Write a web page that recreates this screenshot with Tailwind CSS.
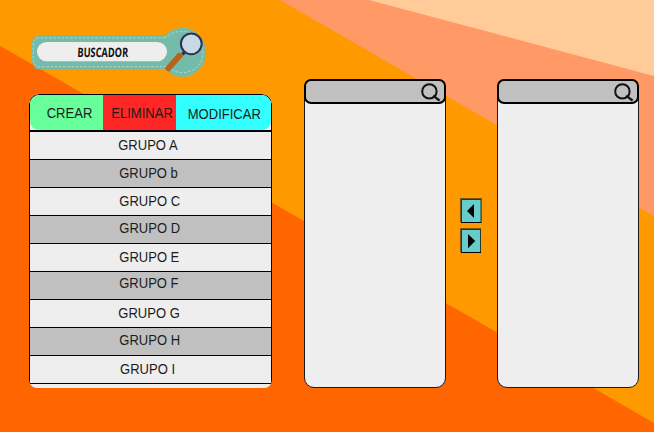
<!DOCTYPE html>
<html lang="es">
<head>
<meta charset="utf-8">
<title>Buscador</title>
<script src="https://cdn.jsdelivr.net/npm/@tailwindcss/browser@4"></script>
</head>
<body class="relative w-[654px] h-[432px] overflow-hidden bg-[#ff6600] font-['Liberation_Sans',sans-serif] text-[14px] leading-[16px] text-[#1c1c1c]">
  <svg class="absolute inset-0" width="654" height="432" viewBox="0 0 654 432">
    <path d="M0 0H654V423L0 45.7Z" fill="#ff9900"/>
    <path d="M280 0H654V216Z" fill="#ff9966"/>
    <path d="M369 0H654V76Z" fill="#ffcc99"/>
  </svg>

  <main class="relative flex h-full items-start">
    <section class="ml-[29px] w-[243px] pt-[27px]">
      <div class="relative h-[67px]">
        <svg width="180" height="52" viewBox="29 27 180 52">
          <g fill="#74bbaa">
            <path d="M39 35.7H170V69.3H39Q34 69.3 33 64Q31.3 61 31.7 57V43Q33 36 39 35.7Z"/>
            <ellipse cx="182.3" cy="52.3" rx="23.7" ry="24.5"/>
          </g>
          <path d="M165 37.8H39Q33.6 38.2 33.3 44V60Q34.5 66.5 39 66.7H166" fill="none" stroke="#b5dccf" stroke-width=".9" stroke-dasharray="2.4 1.8"/>
          <path d="M165 37.8Q172 31.5 183 31.3Q192 31.5 198 38Q203 45 203 53Q202 63 196 68Q190 73 181 72.5Q175 72 171 69" fill="none" stroke="#b5dccf" stroke-width=".9" stroke-dasharray="2.4 1.8"/>
          <rect x="37" y="42" width="130" height="19.2" rx="9.6" fill="#eeeeee"/>
          <path d="M182.5 54.5L186 50" stroke="#33304f" stroke-width="3.5"/>
          <path d="M165.2 67.5L177.6 53.2Q180.5 51.8 183.6 55.4L169.8 71.2Q168 72 166 70Q164.5 68.7 165.2 67.5Z" fill="#b9621c"/>
          <circle cx="191.3" cy="43.8" r="10.4" fill="#c7d9e4" stroke="#33304f" stroke-width="2"/>
        </svg>
        <span class="absolute left-[8px] top-[15px] flex h-[19px] w-[132px] items-center justify-center"><span class="-skew-x-3 scale-x-[.71] font-['Open_Sans',sans-serif] text-[13px] font-bold text-[#111]">BUSCADOR</span></span>
      </div>

      <div class="h-[294px] overflow-hidden rounded-t-[10px] rounded-b-[8px] bg-[#eeeeee]">
        <div class="rounded-t-[10px] border border-b-0 border-black">
          <div class="flex h-[35px] overflow-hidden rounded-[9px]">
            <button class="w-[73px] bg-[#66ff99] pl-[6px]"><span class="inline-block scale-x-[.93]">CREAR</span></button>
            <button class="w-[73px] bg-[#ff2626] pl-[5px]"><span class="-mx-2 inline-block scale-x-[.93]">ELIMINAR</span></button>
            <button class="w-[95px] bg-[#33ffff] pt-[2px] pl-[1px]"><span class="-mx-2 inline-block scale-x-[.93]">MODIFICAR</span></button>
          </div>
          <ul class="border-t-2 border-black text-center">
            <li class="h-[28px] border-b border-black pt-[5px] pr-[5px]"><span class="inline-block scale-x-[.93]">GRUPO A</span></li>
            <li class="h-[28px] border-b border-black bg-[#c0c0c0] pt-[5px] pr-[4px]"><span class="inline-block scale-x-[.93]">GRUPO b</span></li>
            <li class="h-[28px] border-b border-black pt-[5px] pr-[2px]"><span class="inline-block scale-x-[.93]">GRUPO C</span></li>
            <li class="h-[28px] border-b border-black bg-[#c0c0c0] pt-[4px] pr-[2px]"><span class="inline-block scale-x-[.93]">GRUPO D</span></li>
            <li class="h-[28px] border-b border-black pt-[5px] pr-[3px]"><span class="inline-block scale-x-[.93]">GRUPO E</span></li>
            <li class="h-[28px] border-b border-black bg-[#c0c0c0] pt-[3px] pr-[3px]"><span class="inline-block scale-x-[.93]">GRUPO F</span></li>
            <li class="h-[28px] border-b border-black pt-[5px] pr-[2px]"><span class="inline-block scale-x-[.93]">GRUPO G</span></li>
            <li class="h-[28px] border-b border-black bg-[#c0c0c0] pt-[4px] pr-[2px]"><span class="inline-block scale-x-[.93]">GRUPO H</span></li>
            <li class="h-[28px] border-b border-black pt-[5px] pr-[6px]"><span class="inline-block scale-x-[.93]">GRUPO I</span></li>
          </ul>
        </div>
      </div>
    </section>

    <section class="mt-[79px] ml-[32px] h-[309px] w-[142px] rounded-[10px] border border-[#1a1a1a] bg-[#eeeeee]">
      <div class="-mx-px -mt-px flex h-[25px] justify-end rounded-[7px] border-2 border-black bg-[#c0c0c0]">
        <svg class="mr-[3px] mt-px" width="22" height="20" viewBox="419 82 22 20" fill="none" stroke="#111" stroke-width="2">
          <circle cx="429.4" cy="91.4" r="7.2"/><path d="M433.2 95.6L439.6 100.6" stroke-width="2.4"/>
        </svg>
      </div>
    </section>

    <div class="mt-[198px] ml-[14px] flex w-[22px] flex-col gap-[5px]">
      <button class="h-[25px]"><svg width="22" height="25" viewBox="0 0 22 25">
        <path d="M0 0H22V25H1V24H0Z" fill="#7d5010"/><path d="M1 1H21V25H1Z" fill="#1d3b30"/><path d="M2 2H20.5V24H2Z" fill="#66cccc"/><path d="M1 24H21V25H1Z" fill="#000"/><path d="M7 13L14 6V20Z" fill="#000"/>
      </svg></button>
      <button class="h-[25px]"><svg width="22" height="25" viewBox="0 0 22 25">
        <path d="M0 0H21V25H1V24H0Z" fill="#7d5010"/><path d="M1 1H21V25H1Z" fill="#1d3b30"/><path d="M2 2H20V24H2Z" fill="#66cccc"/><path d="M1 24H21V25H1Z" fill="#000"/><path d="M15.2 13L8 6V20.3Z" fill="#000"/>
      </svg></button>
    </div>

    <section class="mt-[79px] ml-[15px] h-[309px] w-[142px] rounded-[10px] border border-[#1a1a1a] bg-[#eeeeee]">
      <div class="-mx-px -mt-px flex h-[25px] justify-end rounded-[7px] border-2 border-black bg-[#c0c0c0]">
        <svg class="mr-[3px] mt-px" width="22" height="20" viewBox="419 82 22 20" fill="none" stroke="#111" stroke-width="2">
          <circle cx="429.4" cy="91.4" r="7.2"/><path d="M433.2 95.6L439.6 100.6" stroke-width="2.4"/>
        </svg>
      </div>
    </section>
  </main>
</body>
</html>
